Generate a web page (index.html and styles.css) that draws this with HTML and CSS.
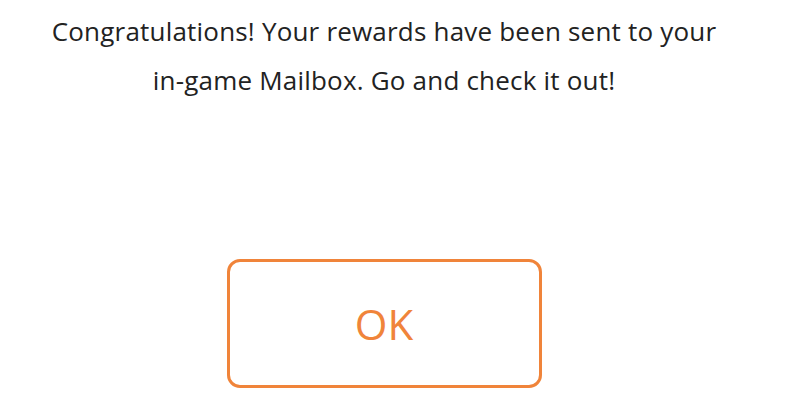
FILE: index.html
```html
<!DOCTYPE html>
<html lang="en">
  <head>
    <meta charset="UTF-8" />
    <meta name="viewport" content="width=device-width, initial-scale=1.0" />
    <title>Rewards Sent</title>
    <link rel="stylesheet" href="styles.css">
  </head>
  <body>
    <div class="dialog">
      <p class="message">
        Congratulations! Your rewards have been sent to your<br />
        in-game Mailbox. Go and check it out!
      </p>
      <button class="ok-button" type="button">OK</button>
    </div>
  </body>
</html>
```

FILE: styles.css
```css
/* Page */
body,
html {
  margin: 0;
  background-color: #fff;
  font-family: "Open Sans", "Noto Sans", Arial, sans-serif;
}

/* Dialog content, centred in the left 768px */
.dialog {
  width: 768px;
  display: flex;
  flex-direction: column;
  align-items: center;
}

.message {
  margin: 0;
  padding-top: 7px;
  font-size: 26px;
  letter-spacing: 0.2px;
  line-height: 49px;
  color: #222;
  text-align: center;
}

.ok-button {
  margin-top: 154px;
  width: 315px;
  height: 129px;
  border: 3px solid #f0843a;
  border-radius: 13px;
  background-color: #fff;
  color: #f0843a;
  font-family: inherit;
  font-size: 42px;
}
```
